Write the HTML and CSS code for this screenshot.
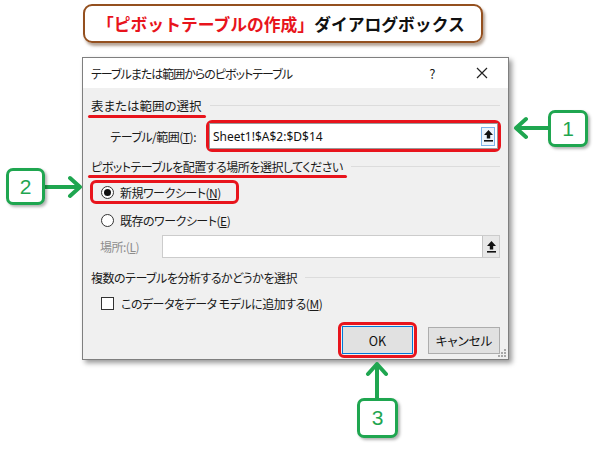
FILE: index.html
```html
<!DOCTYPE html>
<html lang="ja">
<head>
    <meta charset="UTF-8">
    <meta name="viewport" content="width=device-width, initial-scale=1.0">
    <title>ピボットテーブルの作成 ダイアログボックス</title>
    <link rel="stylesheet" href="styles.css">
</head>
<body>
    <div class="page">
        <div class="banner"><span class="red">「ピボットテーブルの作成」</span>ダイアログボックス</div>

        <div class="dialog">
            <div class="titlebar">
                <span class="title">テーブルまたは範囲からのピボットテーブル</span>
                <span class="help">?</span>
                <span class="close">
                    <svg width="12" height="12" viewBox="0 0 12 12"><path d="M1 1 L11 11 M11 1 L1 11" stroke="#222" stroke-width="1.2" fill="none"/></svg>
                </span>
            </div>

            <div class="dialog-body">
                <div class="section sec1"><span class="marked">表または範囲の選択</span><span class="rule"></span></div>

                <div class="field-row">
                    <label class="field-label">テーブル/範囲(<u>T</u>):</label>
                    <div class="hl input-hl">
                        <div class="input">
                            <span class="value">Sheet1!$A$2:$D$14</span>
                            <span class="pick focus">
                                <svg width="9" height="12" viewBox="0 0 9 12"><path d="M4.5 0 L9 5 H6.2 V8.5 H2.8 V5 H0 Z" fill="#111"/><rect x="0" y="10" width="9" height="1.6" fill="#111"/></svg>
                            </span>
                        </div>
                    </div>
                </div>

                <div class="section sec2"><span class="marked">ピボットテーブルを配置する場所を選択してください</span><span class="rule"></span></div>

                <div class="hl radio-hl"><span class="radio on"></span>新規ワークシート(<u>N</u>)</div>
                <div class="option radio-row"><span class="radio"></span>既存のワークシート(<u>E</u>)</div>

                <div class="loc-row">
                    <label class="loc-label">場所:(<u>L</u>)</label>
                    <div class="input disabled">
                        <span class="pick">
                            <svg width="9" height="12" viewBox="0 0 9 12"><path d="M4.5 0 L9 5 H6.2 V8.5 H2.8 V5 H0 Z" fill="#111"/><rect x="0" y="10" width="9" height="1.6" fill="#111"/></svg>
                        </span>
                    </div>
                </div>

                <div class="section sec3"><span>複数のテーブルを分析するかどうかを選択</span><span class="rule"></span></div>

                <div class="option check-row"><span class="check"></span>このデータをデータ&nbsp;モデルに追加する(<u>M</u>)</div>

                <div class="buttons">
                    <div class="hl ok-hl"><button class="btn ok">OK</button></div>
                    <button class="btn">キャンセル</button>
                </div>
            </div>

            <span class="grip">
                <svg width="8" height="8" viewBox="0 0 8 8" fill="#a8a8a8"><rect x="6" y="0" width="2" height="2"/><rect x="3" y="3" width="2" height="2"/><rect x="6" y="3" width="2" height="2"/><rect x="0" y="6" width="2" height="2"/><rect x="3" y="6" width="2" height="2"/><rect x="6" y="6" width="2" height="2"/></svg>
            </span>
        </div>

        <!-- numbered callouts -->
        <svg class="arrow a1" width="38" height="24" viewBox="0 0 38 24"><path d="M4 12 H37 M14 3 L4 12 L14 21" /></svg>
        <div class="callout c1">1</div>

        <svg class="arrow a2" width="40" height="24" viewBox="0 0 40 24"><path d="M0 12 H35 M25 3 L35 12 L25 21" /></svg>
        <div class="callout c2">2</div>

        <svg class="arrow a3" width="24" height="40" viewBox="0 0 24 40"><path d="M12 4 V39 M3 14 L12 4 L21 14" /></svg>
        <div class="callout c3">3</div>
    </div>
</body>
</html>
```

FILE: styles.css
```css
body {
    margin: 0;
    background: #fff;
    font-family: "Noto Sans CJK JP", "Noto Sans", sans-serif;
    color: #1a1a1a;
}
.page {
    position: relative;
    width: 600px;
    height: 449px;
    overflow: hidden;
    padding-top: 4px;
    box-sizing: border-box;
}

/* heading banner */
.banner {
    margin-left: 83px;
    width: 400px;
    height: 39px;
    box-sizing: border-box;
    border: 2px solid #94501f;
    border-radius: 9px;
    box-shadow: 2px 3px 3px rgba(90, 50, 20, 0.45);
    display: flex;
    align-items: center;
    padding-left: 12px;
    font-size: 16.8px;
    font-weight: bold;
    color: #111;
}
.banner .red { color: #e8141c; }

/* dialog window */
.dialog {
    position: relative;
    margin: 14px 0 0 82px;
    width: 427px;
    height: 303px;
    box-sizing: border-box;
    border: 1px solid #7f7f7f;
    background: #f0f0f0;
    box-shadow: 3px 3px 5px rgba(0, 0, 0, 0.4);
    display: flex;
    flex-direction: column;
    font-size: 12px;
    letter-spacing: -0.5px;
    font-feature-settings: "palt";
}
.titlebar {
    height: 30px;
    background: #fff;
    display: flex;
    align-items: center;
    padding: 0 11px 0 8px;
    font-size: 12px;
}
.title {
    flex: 1;
    letter-spacing: -1px;
}
.help {
    width: 30px;
    text-align: center;
    font-size: 13px;
    margin-right: 20px;
}
.close {
    width: 30px;
    display: flex;
    justify-content: center;
}
.dialog-body {
    flex: 1;
    padding: 0 8px;
    display: flex;
    flex-direction: column;
}
.section {
    display: flex;
    align-items: center;
    height: 18px;
}
.rule {
    flex: 1;
    height: 1px;
    background: #dcdcdc;
    margin-left: 8px;
}
.sec1 { margin-top: 8px; letter-spacing: 0; font-size: 12.5px; }
.sec2 { margin-top: 5px; }
.sec3 { margin-top: 10px; }
.marked { position: relative; }
.marked::after {
    content: '';
    position: absolute;
    left: -3px;
    right: -4px;
    bottom: -3px;
    height: 3px;
    border-radius: 2px;
    background: #e8141c;
}

/* red highlight boxes */
.hl {
    border: 3px solid #e8141c;
    border-radius: 6px;
    box-sizing: border-box;
}

.field-row {
    margin-top: 6px;
    display: flex;
    align-items: center;
    height: 32px;
}
.field-label {
    width: 115px;
    padding-right: 10px;
    box-sizing: border-box;
    text-align: right;
}
.input-hl {
    width: 295px;
    height: 32px;
    margin-right: -1px;
}
.input {
    height: 100%;
    box-sizing: border-box;
    background: #fff;
    border: 1px solid #9a9a9a;
    display: flex;
    align-items: center;
}
.value {
    padding-left: 3px;
    font-family: "Noto Sans", sans-serif;
    font-size: 12px;
    letter-spacing: 0;
    color: #111;
}
.pick {
    margin-left: auto;
    width: 17px;
    height: 100%;
    box-sizing: border-box;
    display: flex;
    align-items: center;
    justify-content: center;
    background: #e8e8e8;
    border-left: 1px solid #c4c4c4;
}
.pick.focus {
    width: 14px;
    height: 19px;
    margin-right: 2px;
    background: #eef5fc;
    border: 1px solid #7eb4ea;
}

.option {
    display: flex;
    align-items: center;
    height: 18px;
    padding-left: 10px;
}
.radio-hl {
    margin: 5px 0 0 -1px;
    width: 149px;
    height: 24px;
    display: flex;
    align-items: center;
    padding-left: 8px;
}
.radio-row { margin-top: 7px; }
.radio {
    width: 13px;
    height: 13px;
    box-sizing: border-box;
    border: 1px solid #333;
    border-radius: 50%;
    background: #fff;
    margin-right: 6px;
    display: flex;
    align-items: center;
    justify-content: center;
}
.radio.on::after {
    content: '';
    width: 7px;
    height: 7px;
    border-radius: 50%;
    background: #111;
}

.loc-row {
    margin-top: 6px;
    height: 23px;
    display: flex;
}
.loc-label {
    width: 71px;
    padding-left: 9px;
    box-sizing: border-box;
    color: #8d8d8d;
    display: flex;
    align-items: center;
}
.input.disabled {
    flex: 1;
    border-color: #cccccc;
}

.check-row {
    margin-top: 8px;
}
.check {
    width: 13px;
    height: 13px;
    box-sizing: border-box;
    border: 1px solid #333;
    background: #fff;
    margin-right: 7px;
}

.buttons {
    margin-top: 10px;
    display: flex;
    justify-content: flex-end;
    align-items: center;
    gap: 11px;
}
.ok-hl {
    padding: 1px;
}
.btn {
    font-family: inherit;
    font-size: 12.5px;
    font-feature-settings: "palt";
    color: #111;
    background: #e1e1e1;
    border: 1px solid #adadad;
    width: 72px;
    height: 27px;
    padding: 0;
}
.btn.ok {
    display: block;
    width: 71px;
    height: 28px;
    border-color: #0078d7;
}
.grip {
    position: absolute;
    right: 2px;
    bottom: 2px;
    display: flex;
}

/* numbered green callouts */
.callout {
    position: absolute;
    box-sizing: border-box;
    border: 3px solid #1fa650;
    border-radius: 7px;
    background: #fff;
    box-shadow: 2px 2px 3px rgba(0, 0, 0, 0.3);
    color: #1fa650;
    font-family: "Liberation Sans", Arial, sans-serif;
    font-size: 21px;
    display: flex;
    align-items: center;
    justify-content: center;
}
.c1 { left: 548px; top: 110px; width: 40px; height: 37px; }
.c2 { left: 6px; top: 168px; width: 39px; height: 37px; }
.c3 { left: 357px; top: 398px; width: 41px; height: 40px; }
.arrow {
    position: absolute;
    fill: none;
    stroke: #1fa650;
    stroke-width: 4;
    stroke-linecap: round;
    stroke-linejoin: round;
}
.a1 { left: 512px; top: 116px; }
.a2 { left: 45px; top: 175px; }
.a3 { left: 365px; top: 360px; }
```
